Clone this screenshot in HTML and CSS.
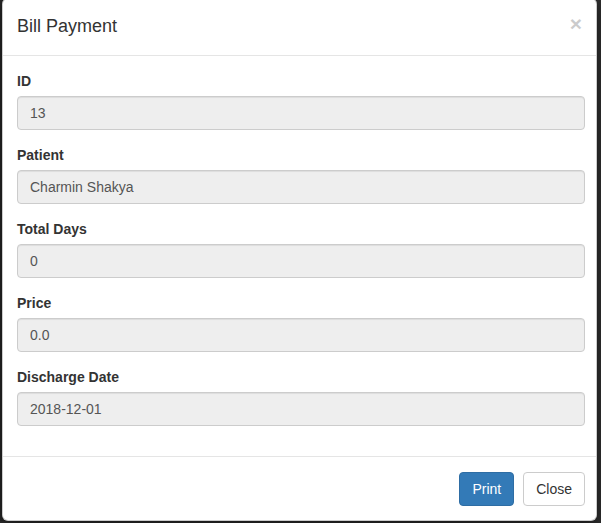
FILE: index.html
```html
<!DOCTYPE html>
<html lang="en">
<head>
<meta charset="utf-8">
<title>Bill Payment</title>
<link rel="stylesheet" href="styles.css">
</head>
<body>
<div class="backdrop">
  <div class="modal">
    <div class="modal-header">
      <h4 class="modal-title">Bill Payment</h4>
      <button type="button" class="close" aria-label="Close">&times;</button>
    </div>
    <div class="modal-body">
      <div class="form-group">
        <label>ID</label>
        <input class="form-control" type="text" value="13" readonly>
      </div>
      <div class="form-group">
        <label>Patient</label>
        <input class="form-control" type="text" value="Charmin Shakya" readonly>
      </div>
      <div class="form-group">
        <label>Total Days</label>
        <input class="form-control" type="text" value="0" readonly>
      </div>
      <div class="form-group">
        <label>Price</label>
        <input class="form-control" type="text" value="0.0" readonly>
      </div>
      <div class="form-group">
        <label>Discharge Date</label>
        <input class="form-control" type="text" value="2018-12-01" readonly>
      </div>
    </div>
    <div class="modal-footer">
      <button type="button" class="btn btn-primary">Print</button>
      <button type="button" class="btn btn-default">Close</button>
    </div>
  </div>
</div>
</body>
</html>
```
FILE: styles.css
```css
* { box-sizing: border-box; }
html, body {
  margin: 0;
  padding: 0;
  height: 100%;
}
body {
  font-family: "Liberation Sans", Arial, Helvetica, sans-serif;
  font-size: 14px;
  line-height: 1.42857143;
  color: #333;
  background: #2e2e2e;
  overflow: hidden;
}
.backdrop {
  height: 100%;
  padding-left: 2px;
  background: linear-gradient(to right, #262626 0, #2f2f2f 100%);
}
.modal {
  width: 595px;
  margin-top: -2px;
  background: #fff;
  border: 1px solid rgba(0, 0, 0, 0.2);
  border-radius: 6px;
  box-shadow: 0 5px 15px rgba(0, 0, 0, 0.5);
}
.modal-header {
  display: flex;
  justify-content: space-between;
  align-items: flex-start;
  padding: 15px 14px 15px 14px;
  border-bottom: 1px solid #e5e5e5;
}
.modal-title {
  margin: 0;
  font-size: 18px;
  font-weight: 500;
  line-height: 1.42857143;
  color: #333;
}
.close {
  margin-top: -1px;
  padding: 0;
  border: 0;
  background: transparent;
  font-family: "Liberation Sans", Arial, sans-serif;
  font-size: 21px;
  font-weight: 700;
  line-height: 1;
  color: #000;
  opacity: 0.2;
  cursor: pointer;
}
.modal-body {
  padding: 15px 11px 15px 14px;
}
.form-group {
  margin-bottom: 15px;
}
.form-group label {
  display: block;
  margin-bottom: 5px;
  font-weight: 700;
  color: #333;
}
.form-control {
  display: block;
  width: 100%;
  height: 34px;
  padding: 6px 12px;
  font-family: inherit;
  font-size: 14px;
  line-height: 1.42857143;
  color: #555;
  background: #eee;
  border: 1px solid #ccc;
  border-radius: 4px;
  box-shadow: inset 0 1px 1px rgba(0, 0, 0, 0.075);
  outline: none;
}
.modal-footer {
  display: flex;
  justify-content: flex-end;
  gap: 9px;
  padding: 15px 11px 14px 14px;
  border-top: 1px solid #e5e5e5;
}
.btn {
  display: inline-block;
  height: 34px;
  padding: 6px 12px;
  font-family: inherit;
  font-size: 14px;
  line-height: 1.42857143;
  border: 1px solid transparent;
  border-radius: 4px;
  cursor: pointer;
}
.btn-primary {
  color: #fff;
  background: #337ab7;
  border-color: #2e6da4;
}
.btn-default {
  color: #333;
  background: #fff;
  border-color: #ccc;
}
```
